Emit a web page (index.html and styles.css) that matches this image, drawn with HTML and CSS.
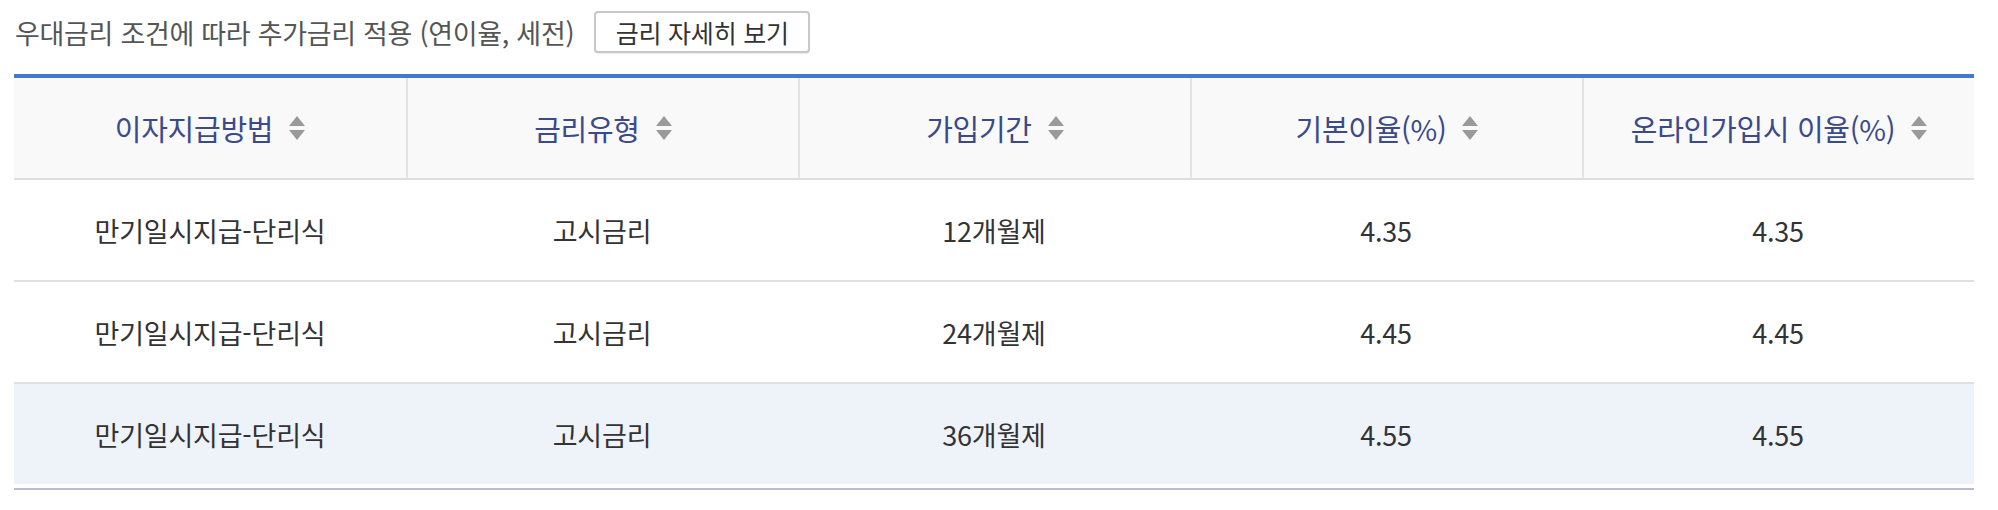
FILE: index.html
```html
<!DOCTYPE html>
<html lang="ko">
<head>
<meta charset="utf-8">
<title>금리</title>
<link rel="stylesheet" href="styles.css">
</head>
<body>
<div class="wrap">
  <div class="intro">
    <span class="intro-text">우대금리 조건에 따라 추가금리 적용 (연이율, 세전)</span>
    <button class="btn" type="button">금리 자세히 보기</button>
  </div>
  <table class="rates">
    <thead>
      <tr>
        <th><span class="th-in">이자지급방법<i class="sort"></i></span></th>
        <th><span class="th-in">금리유형<i class="sort"></i></span></th>
        <th><span class="th-in">가입기간<i class="sort"></i></span></th>
        <th><span class="th-in">기본이율(%)<i class="sort"></i></span></th>
        <th><span class="th-in">온라인가입시 이율(%)<i class="sort"></i></span></th>
      </tr>
    </thead>
    <tbody>
      <tr>
        <td>만기일시지급-단리식</td>
        <td>고시금리</td>
        <td>12개월제</td>
        <td>4.35</td>
        <td>4.35</td>
      </tr>
      <tr>
        <td>만기일시지급-단리식</td>
        <td>고시금리</td>
        <td>24개월제</td>
        <td>4.45</td>
        <td>4.45</td>
      </tr>
      <tr class="hl last">
        <td>만기일시지급-단리식</td>
        <td>고시금리</td>
        <td>36개월제</td>
        <td>4.55</td>
        <td>4.55</td>
      </tr>
    </tbody>
  </table>
</div>
</body>
</html>
```

FILE: styles.css
```css
* { box-sizing: border-box; }
html, body { margin: 0; padding: 0; background: #fff; }
body {
  font-family: "Noto Sans CJK KR", "Noto Sans", sans-serif;
  color: #333;
}
.wrap {
  padding: 11px 24px 0 14px;
}
.intro {
  display: flex;
  align-items: center;
  height: 42px;
}
.intro-text {
  font-size: 27px;
  color: #555;
  letter-spacing: -0.3px;
  padding-left: 1px;
}
.btn {
  margin-left: 20px;
  height: 42px;
  width: 216px;
  padding: 0;
  border: 2px solid #c8c8c8;
  border-radius: 4px;
  background: #fff;
  font-family: inherit;
  font-size: 25px;
  letter-spacing: -0.2px;
  color: #333;
  box-shadow: 0 1px 1px rgba(0,0,0,0.08);
}
.rates {
  margin-top: 21px;
  width: 100%;
  table-layout: fixed;
  border-collapse: separate;
  border-spacing: 0;
  border-top: 4px solid #4677d0;
  border-bottom: 2px solid #b9bccf;
}
.rates th {
  height: 102px;
  background: #f9f9f9;
  border-bottom: 2px solid #dedede;
  font-weight: 400;
  font-size: 29px;
  letter-spacing: -0.3px;
  color: #3b4a8b;
  padding: 0;
  text-align: center;
}
.rates th + th { border-left: 2px solid #e3e3e3; }
.th-in {
  display: inline-flex;
  align-items: center;
}
.sort {
  display: inline-flex;
  flex-direction: column;
  justify-content: space-between;
  width: 16px;
  height: 24px;
  margin-left: 16px;
}
.sort::before, .sort::after {
  content: "";
  display: block;
  width: 0;
  height: 0;
  border-left: 8px solid transparent;
  border-right: 8px solid transparent;
}
.sort::before { border-bottom: 10px solid #9a9a9a; }
.sort::after { border-top: 10px solid #9a9a9a; }
.rates td {
  height: 102px;
  border-bottom: 2px solid #e0e0e0;
  font-size: 27px;
  letter-spacing: -0.2px;
  color: #333;
  text-align: center;
  padding: 0;
}
.rates tr.hl td { background: #eef2f9; }
.rates tr.last td { border-bottom: 4px solid #fff; height: 104px; }
```
